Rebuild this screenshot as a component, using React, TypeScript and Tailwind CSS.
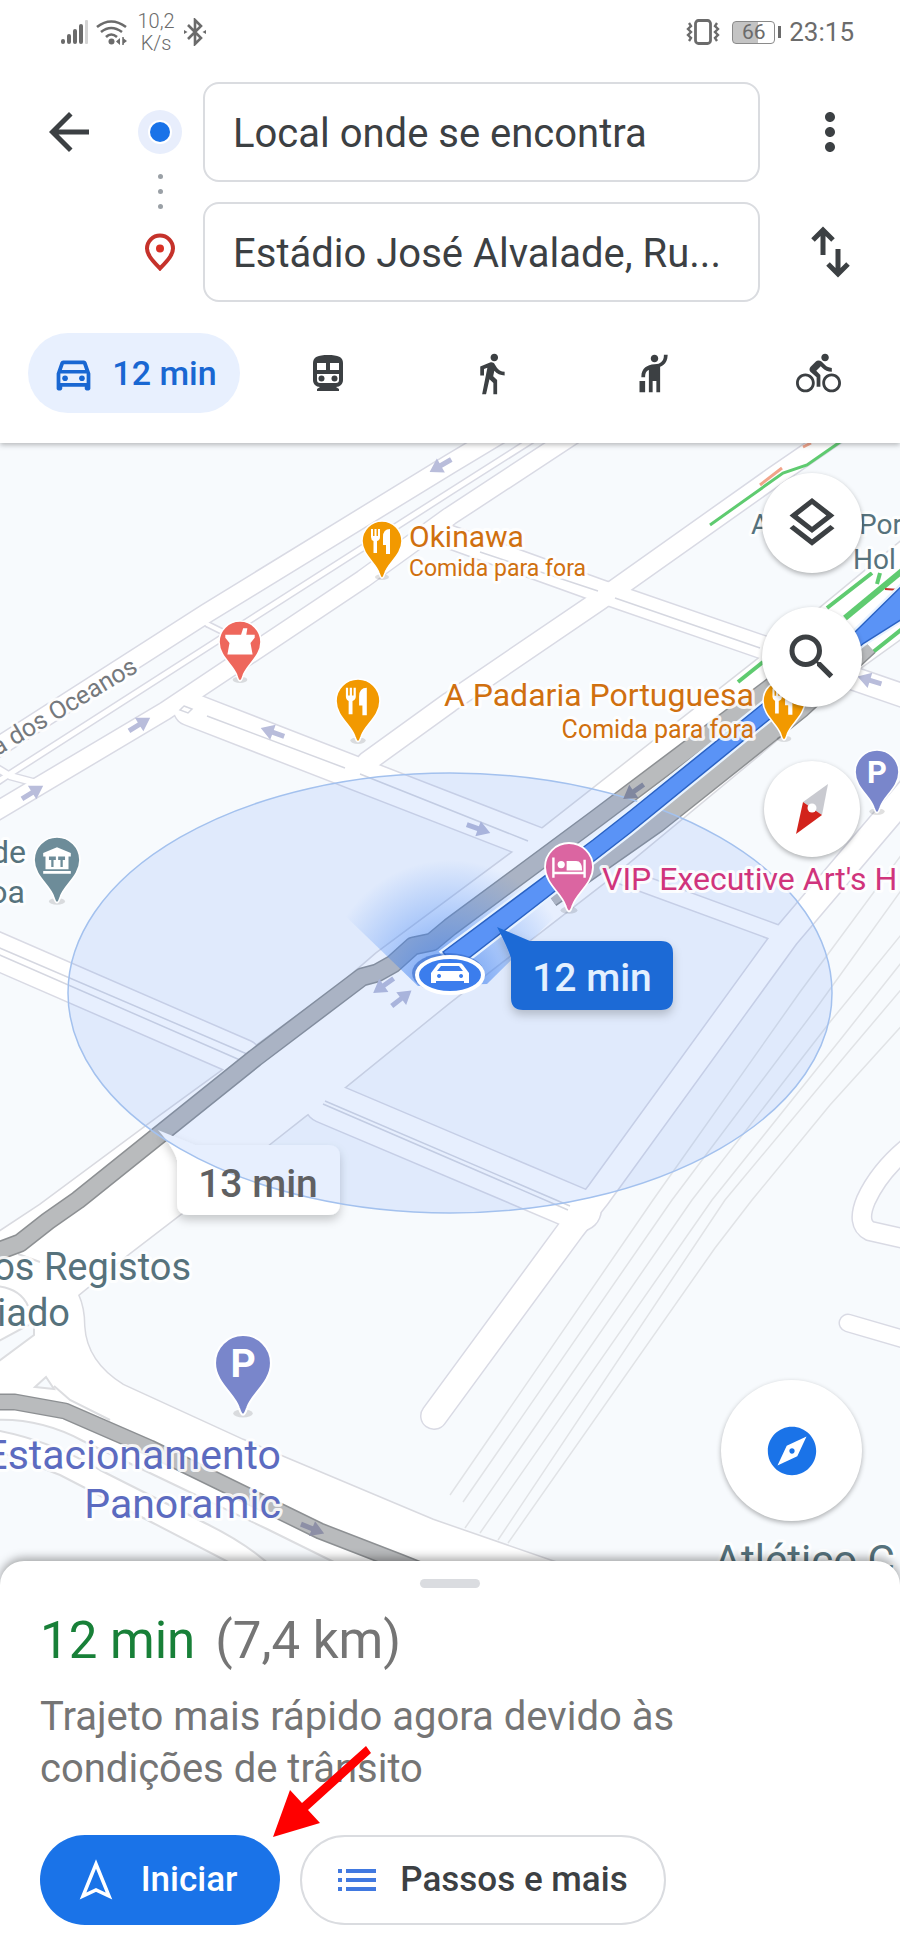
import type { ReactNode } from "react";
import {
  MdArrowBack,
  MdDirectionsBike,
  MdDirectionsWalk,
  MdExplore,
  MdHail,
  MdMoreVert,
  MdOutlineDirectionsCar,
  MdOutlineLayers,
  MdSearch,
} from "react-icons/md";

/* ---------- Status bar ---------- */

const StatusBar = () => (
  <div className="flex h-16 items-center justify-between pl-[60px] pr-[46px] text-[#6b6b6b]">
    <div className="flex items-center gap-2">
      <svg width="28" height="26" viewBox="0 0 28 26" fill="currentColor" aria-hidden="true">
        <rect x="1" y="20" width="4" height="5" rx="2" />
        <rect x="7" y="15" width="4" height="10" rx="2" />
        <rect x="13" y="10" width="4" height="15" rx="2" />
        <rect x="19" y="5" width="4" height="20" rx="2" />
        <rect x="25" y="1" width="3" height="24" rx="1" fill="#d4d4d4" />
      </svg>
      <svg width="32" height="26" viewBox="0 0 32 26" fill="none" stroke="currentColor" strokeWidth="2.6" aria-hidden="true">
        <path d="M1 8Q15 -3 30 8" />
        <path d="M5 13Q15 5 26 13" />
        <path d="M10 18Q15 13 21 18" />
        <circle cx="15.500" cy="22.500" r="3" fill="currentColor" stroke="none" />
        <path d="M24 19v7l-4-3.500zM26 19v7M27 19v6l4-3z" fill="currentColor" stroke="none" />
        <path d="M27 18v8" strokeWidth="1.500" />
      </svg>
      <p className="w-10 text-center text-[20px] font-light leading-[22px]">
        10,2
        <br />
        K/s
      </p>
      <svg width="22" height="28" viewBox="0 0 22 28" fill="none" stroke="currentColor" strokeWidth="2.600" aria-hidden="true">
        <path d="M4 7l13 13-6 6V2l6 6L4 21" />
        <path d="M0 12l3.500 2L0 16zM22 12l-3.500 2 3.500 2z" fill="currentColor" stroke="none" />
      </svg>
    </div>
    <div className="flex items-center gap-2">
      <svg width="34" height="26" viewBox="0 0 34 26" fill="none" stroke="currentColor" strokeWidth="2" aria-hidden="true">
        <rect x="9.500" y="1.500" width="15" height="23" rx="3" strokeWidth="2.800" />
        <path d="M3 4l2 3-3 3 3 3-3 3 3 3-2 3M31 4l-2 3 3 3-3 3 3 3-3 3 2 3" strokeWidth="2.400" />
      </svg>
      <div className="ml-1 flex items-center gap-[3px]">
        <div className="flex h-[23px] w-[43px] items-center justify-center rounded-[4px] border border-[#8a8a8a] bg-linear-to-r from-[#c4c4c4] from-60% to-white to-60% text-[21px] leading-none">
          66
        </div>
        <span className="h-3 w-[3px] bg-[#6b6b6b]" />
      </div>
      <span className="text-[26px] leading-none">23:15</span>
    </div>
  </div>
);

/* ---------- Header ---------- */

const SwapIcon = () => (
  <svg width="40" height="52" viewBox="0 0 40 52" fill="none" stroke="currentColor" strokeWidth="5" aria-hidden="true">
    <path d="M13 29V5M3 14L13 4l10 10" />
    <path d="M28 23v24M18 38l10 10 10-10" />
  </svg>
);

const TransitIcon = () => (
  <svg width="30" height="36" viewBox="0 0 30 36" fill="currentColor" aria-hidden="true">
    <path
      fillRule="evenodd"
      d="M15 0C5 0 0 2 0 8v17c0 4 3 7 7 7l-3 2v2h22v-2l-3-2c4 0 7-3 7-7V8c0-6-5-8-15-8zM4 8h9v7H4zM17 8h9v7h-9zM4 19h22v6c0 2-1 3-3 3H7c-2 0-3-1-3-3z"
    />
    <circle cx="8.500" cy="23.500" r="3" />
    <circle cx="21.500" cy="23.500" r="3" />
  </svg>
);

const modes = [
  { label: "Transportes públicos", icon: <TransitIcon /> },
  { label: "A pé", icon: <MdDirectionsWalk size={45} /> },
  { label: "Serviços de transporte", icon: <MdHail size={45} /> },
  { label: "Bicicleta", icon: <MdDirectionsBike size={45} /> },
];

const fieldClass =
  "h-[100px] w-full min-w-0 rounded-2xl border-2 border-[#dadce0] bg-white px-7 pt-[2px] text-[40px] text-[#3c4043] outline-none";

const Header = () => (
  <header className="relative z-10 bg-white pb-[30px] text-[#3c4043] shadow-[0_2px_5px_rgba(60,64,67,0.35)]">
    <StatusBar />
    <div className="mt-[18px] flex">
      <div className="flex h-[100px] w-[138px] items-center justify-center">
        <button type="button" aria-label="Voltar">
          <MdArrowBack size={60} />
        </button>
      </div>
      <div className="mr-[21px] flex w-11 flex-col items-center pt-7">
        <span className="flex size-11 items-center justify-center rounded-full bg-[#e8eefc]">
          <span className="size-5 rounded-full bg-[#1a73e8] ring-2 ring-white" />
        </span>
        <span className="mt-5 flex flex-col gap-[10px]">
          <span className="size-[5px] rounded-full bg-[#9aa0a6]" />
          <span className="size-[5px] rounded-full bg-[#9aa0a6]" />
          <span className="size-[5px] rounded-full bg-[#9aa0a6]" />
        </span>
        <svg className="mt-6" width="32" height="38" viewBox="0 0 32 38" aria-hidden="true">
          <path
            d="M16 35.500C9 28 3 22 3 15.500a13 13 0 0 1 26 0C29 22 23 28 16 35.500z"
            fill="none"
            stroke="#c5322b"
            strokeWidth="4"
          />
          <circle cx="16" cy="15.500" r="4" fill="#d93025" />
        </svg>
      </div>
      <div className="flex min-w-0 flex-1 flex-col gap-5">
        <input className={fieldClass} aria-label="Ponto de partida" defaultValue="Local onde se encontra" />
        <input className={fieldClass} aria-label="Destino" defaultValue="Estádio José Alvalade, Ru..." />
      </div>
      <div className="flex w-[140px] flex-col items-center gap-5">
        <button type="button" aria-label="Mais opções" className="flex h-[100px] items-center">
          <MdMoreVert size={60} />
        </button>
        <button type="button" aria-label="Trocar partida e destino" className="flex h-[100px] items-center">
          <SwapIcon />
        </button>
      </div>
    </div>
    <nav className="mt-[31px] flex gap-[6px] pl-7">
      <button
        type="button"
        className="flex h-20 w-[212px] items-center justify-center gap-4 rounded-full bg-[#e8f0fe] text-[34px] font-medium text-[#1967d2]"
      >
        <MdOutlineDirectionsCar size={45} />
        12 min
      </button>
      <div className="grid flex-1 grid-cols-4">
        {modes.map((mode) => (
          <button key={mode.label} type="button" aria-label={mode.label} className="flex items-center justify-center">
            {mode.icon}
          </button>
        ))}
      </div>
    </nav>
  </header>
);

/* ---------- Map ---------- */

const streets = [
  { d: "M-10 752L207 613L450 464L500 434", w: 18 },
  { d: "M-10 787L5 777L217 641L450 492L535 438", w: 5 },
  { d: "M-10 764L10 776L40 784", w: 6 },
  { d: "M-20 821L165 711L363 579L450 516L572 436", w: 17 },
  { d: "M207 624L225 633", w: 4 },
  { d: "M190 709L540 845", w: 32 },
  { d: "M367 762L450 702L600 600L775 476L845 428", w: 19 },
  { d: "M450 537L600 591L765 648L910 698", w: 22 },
  { d: "M-10 948L243 1058", w: 36 },
  { d: "M600 868L785 936", w: 15 },
  { d: "M325 1102L580 1210", w: 41 },
  { d: "M434 1416L572 1228L598 1195L786 936L910 790", w: 25 },
  { d: "M910 1146Q880 1170 866 1200Q856 1224 870 1231L910 1240", w: 18 },
  { d: "M848 1323L910 1341", w: 16 },
];

const avenue =
  "M910 534L757 660L543 828L513 852L377 953L340 985L160 1116L40 1205L-10 1238V1600H620L560 1564L433 1520L243 1440L123 1385Q86 1362 84 1326Q84 1308 78 1295L127 1255L183 1212L305 1116L345 1087L450 1002L610 878L760 754L860 668L910 632Z";

const rails = [
  "M450 1495L653 1200L800 992L905 850",
  "M463 1502L672 1200L815 1010L905 885",
  "M465 1528L692 1200L830 1022L905 930",
  "M480 1533L712 1200L840 1040L905 958",
  "M498 1540L725 1200L850 1050L905 985",
  "M508 1543L715 1248L752 1200L830 1105L905 1022",
];

const medians = [
  "M207 716L345 768M360 774L528 841",
  "M480 552L598 591M615 598L760 648",
  "M-5 946L247 1054M-5 953L240 1060",
  "M325 1101L570 1206M323 1104L568 1210",
  "M184 706l8 3-4 4-8-3z",
];

const mainRoute = "M443 952L593 840L630 811L760 706L856 631L910 578V614L864 643L760 727L630 833L456 968Z";

const Arrow = ({ x, y, angle, color = "#b9bddb" }: { x: number; y: number; angle: number; color?: string }) => (
  <path d="M-13 -2.500H-1V-8L12 0L-1 8V2.500H-13Z" fill={color} transform={`translate(${x} ${y}) rotate(${angle})`} />
);

const Pin = ({ x, y, r, color, children }: { x: number; y: number; r: number; color: string; children: ReactNode }) => (
  <g transform={`translate(${x} ${y}) scale(${r / 20})`}>
    <ellipse cx="0" cy="36" rx="7" ry="3" fill="#000" opacity="0.12" />
    <path
      d="M0 37C-1.500 37 -2 35 -3 32C-6 22 -20 14 -20 0A20 20 0 1 1 20 0C20 14 6 22 3 32C2 35 1.500 37 0 37Z"
      fill={color}
      stroke="#fff"
      strokeWidth="1.500"
    />
    {children}
  </g>
);

const Food = () => (
  <g fill="#fff">
    <path d="M-11 -12h2v7h1.500v-7h2v7H-4v-7h2v8q0 3-3 4v12h-3.500V0Q-11-1-11-4z" />
    <path d="M8 -12v25H4V4H1V-4Q1-12 8-12z" />
  </g>
);

const Parking = () => (
  <text y="10" textAnchor="middle" fontSize="28" fontWeight="700" fill="#fff">
    P
  </text>
);

const CityMap = () => (
  <svg className="block h-full w-full" viewBox="0 443 900 1142" role="img" aria-label="Mapa do trajeto" fontFamily="Roboto, sans-serif">
    <defs>
      <radialGradient id="beam" gradientUnits="userSpaceOnUse" cx="450" cy="985" r="125">
        <stop offset="0.2" stopColor="#3b7ded" stopOpacity="0.6" />
        <stop offset="0.6" stopColor="#4285f4" stopOpacity="0.3" />
        <stop offset="1" stopColor="#4285f4" stopOpacity="0" />
      </radialGradient>
      <filter id="soft" x="-20%" y="-20%" width="140%" height="160%">
        <feDropShadow dx="0" dy="5" stdDeviation="5" floodOpacity="0.2" />
      </filter>
    </defs>
    <rect y="443" width="900" height="1142" fill="#f7fafd" />

    {/* railway */}
    <g fill="none" stroke="#e1e3e6" strokeWidth="1.500">
      {rails.map((d) => (
        <path key={d} d={d} />
      ))}
    </g>

    {/* streets: casings first so that the junctions merge */}
    <g fill="none" strokeLinecap="round" strokeLinejoin="round">
      {streets.map((s) => (
        <path key={s.d} d={s.d} stroke="#d9dae4" strokeWidth={s.w + 3} />
      ))}
      <path d={avenue} stroke="#d9dae0" strokeWidth="3" />
      {streets.map((s) => (
        <path key={s.d} d={s.d} stroke="#fff" strokeWidth={s.w} />
      ))}
    </g>
    <path d={avenue} fill="#fff" />
    <g fill="none" stroke="#d5d7e0" strokeWidth="1.500">
      {medians.map((d) => (
        <path key={d} d={d} />
      ))}
    </g>

    {/* roundabout and blocks in the south west */}
    <g fill="#f7fafd" stroke="#dcdde0" strokeWidth="2">
      <path d="M-5 1420Q40 1418 83 1441L177 1486L267 1529L350 1570H275Q250 1545 205 1523L100 1470Q50 1440 -5 1430Z" />
      <path d="M-5 1450L60 1475L153 1523L240 1568L230 1600H-5Z" />
      <path d="M-5 1343L34 1322V1335L-5 1364Z" />
      <path d="M-5 1286Q20 1288 28 1306" fill="none" />
      <path d="M35 1387L46 1377L54 1389Z" />
      <path d="M54 1386L70 1400L110 1420" fill="none" />
      <path d="M18 1254L40 1262" fill="none" />
    </g>

    {/* live traffic */}
    <g fill="none" stroke="#5fcb70" strokeWidth="4">
      <path d="M710 525L783 473L807 465L840 442" strokeWidth="3" />
      <path d="M738 682L763 662M827 608L872 573M863 660L902 629" />
      <path d="M845 618L902 571" strokeWidth="6" />
      <path d="M877 584L880 573" />
      <path d="M760 485L782 468M803 447l8-4" stroke="#f2a48a" strokeWidth="3" />
      <path d="M885 589L902 590" stroke="#c5322b" strokeWidth="2" />
    </g>

    {/* alternative routes */}
    <g fill="none" strokeLinejoin="round">
      <g stroke="#8d9093" strokeWidth="19">
        <path d="M775 684L597 818L450 927L432 942L413 946L393 964L377 973L362 977L255 1058L78 1200L48 1221L20 1243L-20 1258" />
        <path d="M868 645L800 708L657 822L550 897" strokeWidth="22" />
        <path d="M-20 1402H15L65 1411L150 1448L320 1531L400 1562L440 1578" strokeWidth="17" />
      </g>
      <g stroke="#b9bbbd" strokeWidth="16">
        <path d="M775 684L597 818L450 927L432 942L413 946L393 964L377 973L362 977L255 1058L78 1200L48 1221L20 1243L-20 1258" />
        <path d="M868 645L800 708L657 822L550 897" strokeWidth="19" />
        <path d="M-20 1402H15L65 1411L150 1448L320 1531L400 1562L440 1578" strokeWidth="14" />
      </g>
    </g>

    {/* 13 min callout, below the accuracy circle */}
    <path
      d="M158 1130L195 1145H328Q340 1145 340 1157V1203Q340 1215 328 1215H189Q177 1215 177 1203V1160Q174 1148 158 1130Z"
      fill="#fff"
      filter="url(#soft)"
    />
    <ellipse cx="450" cy="993" rx="382" ry="220" fill="#4285f4" fillOpacity="0.13" stroke="#a3c1ee" strokeWidth="1.500" />

    <Arrow x={440} y={466} angle={150} />
    <Arrow x={140} y={724} angle={-32} />
    <Arrow x={33} y={792} angle={-32} />
    <Arrow x={272} y={732} angle={200} />
    <Arrow x={479} y={829} angle={20} color="#a9b4dc" />
    <Arrow x={383} y={986} angle={145} color="#a9b4dc" />
    <Arrow x={402} y={998} angle={-38} color="#a9b4dc" />
    <Arrow x={633} y={792} angle={145} color="#80879f" />
    <Arrow x={313} y={1529} angle={22} color="#8d8fa6" />
    <Arrow x={869} y={680} angle={197} />

    {/* heading beam and main route */}
    <path d="M418 986L335 906L370 850H560L570 902L487 984Z" fill="url(#beam)" />
    <path d={mainRoute} fill="none" stroke="#e8f3ff" strokeWidth="6" />
    <path d={mainRoute} fill="#5a93f6" stroke="#2a62c4" strokeWidth="1.500" />
    <ellipse cx="448" cy="973" rx="36" ry="20" fill="#3367c7" opacity="0.6" />
    <ellipse cx="450" cy="975" rx="33" ry="18" fill="#3b7ded" stroke="#fff" strokeWidth="4" />
    <path
      fillRule="evenodd"
      fill="#fff"
      d="M431 983V973L437 965Q438 963 441 963H459Q462 963 463 965L469 973V983H464V981H436V983ZM437 971H463L459 966H441ZM439 974a2 2 0 1 0 .1 0zM461 974a2 2 0 1 0 .1 0z"
    />

    {/* places */}
    <Pin x={382} y={541} r={20} color="#f29900">
      <Food />
    </Pin>
    <Pin x={358} y={701} r={22} color="#f29900">
      <Food />
    </Pin>
    <Pin x={784} y={701} r={21} color="#f29900">
      <Food />
    </Pin>
    <Pin x={240} y={642} r={21} color="#ee675c">
      <path d="M-14 -7H1L3 -13H7L6 -7H14V-4L10 1L12 12H-12L-10 1L-14 -4Z" fill="#fff" />
    </Pin>
    <Pin x={57} y={860} r={23} color="#6d8c99">
      <path
        d="M0 -11L12 -6V-3H10V8H-10V-3H-12V-6ZM-7 -3V0H-5V6H-3V0H-1V-3ZM1 -3V0H3V6H5V0H7V-3ZM-12 9.500H12V12H-12Z"
        fill="#fff"
        fillRule="evenodd"
      />
    </Pin>
    <Pin x={569} y={867} r={24} color="#db65a1">
      <g fill="#fff">
        <path d="M-14 -8H-12V4H12V-6H14V9H12V6H-12V9H-14Z" />
        <circle cx="-6.500" cy="-2" r="3" />
        <path d="M-2 -5H6Q11 -5 11 3H-2Z" />
      </g>
    </Pin>
    <Pin x={877} y={772} r={22} color="#7986cb">
      <Parking />
    </Pin>
    <Pin x={243} y={1363} r={28} color="#7986cb">
      <Parking />
    </Pin>

    {/* labels with a light halo */}
    <g stroke="#fff" strokeOpacity="0.85" strokeWidth="6" strokeLinejoin="round" paintOrder="stroke">
      <g fill="#d0700f">
        <text x="409" y="547" fontSize="30">Okinawa</text>
        <text x="409" y="576" fontSize="23">Comida para fora</text>
        <text x="754" y="706" fontSize="32" textAnchor="end">A Padaria Portuguesa</text>
        <text x="754" y="738" fontSize="25" textAnchor="end">Comida para fora</text>
      </g>
      <text x="602" y="890" fontSize="32" fill="#d0347c">VIP Executive Art's H</text>
      <g fill="#56727c">
        <text x="751" y="534" fontSize="28">A</text>
        <text x="859" y="534" fontSize="28">Por</text>
        <text x="853" y="569" fontSize="28">Hol</text>
        <text x="26" y="863" fontSize="32" textAnchor="end">de</text>
        <text x="25" y="903" fontSize="32" textAnchor="end">oa</text>
        <text x="191" y="1280" fontSize="38" textAnchor="end">os Registos</text>
        <text x="70" y="1326" fontSize="38" textAnchor="end">iado</text>
        <text x="714" y="1575" fontSize="42">Atlético C</text>
      </g>
      <g fill="#5c6bc0" fontSize="41" textAnchor="end">
        <text x="281" y="1469">Estacionamento</text>
        <text x="281" y="1518">Panoramic</text>
      </g>
      <text fontSize="25" textAnchor="end" fill="#75797d" transform="translate(139 671) rotate(-31)">
        a dos Oceanos
      </text>
    </g>

    {/* travel time callouts */}
    <path
      d="M497 927L530 941H661Q673 941 673 953V998Q673 1010 661 1010H523Q511 1010 511 998V958Q508 948 497 927Z"
      fill="#1f6bd6"
      filter="url(#soft)"
    />
    <g fontSize="39" fontWeight="500" textAnchor="middle">
      <text x="592" y="991" fill="#e3f0ff">12 min</text>
      <text x="258" y="1197" fill="#5f6062">13 min</text>
    </g>
  </svg>
);

const roundButton =
  "pointer-events-auto flex items-center justify-center rounded-full bg-white text-[#3c4043] shadow-[0_2px_5px_rgba(0,0,0,0.3)]";

const MapPanel = () => (
  <section className="relative aspect-[900/1142] w-full overflow-hidden">
    <CityMap />
    <div className="pointer-events-none absolute inset-0 flex flex-col items-end justify-between pb-16 pr-[38px] pt-[30px]">
      <div className="flex flex-col items-center">
        <button type="button" aria-label="Camadas" className={`${roundButton} size-[100px]`}>
          <MdOutlineLayers size={60} />
        </button>
        <button type="button" aria-label="Pesquisar" className={`${roundButton} mt-[34px] size-[100px]`}>
          <MdSearch size={60} />
        </button>
        <button type="button" aria-label="Bússola" className={`${roundButton} mt-[54px] size-24`}>
          <svg width="34" height="52" viewBox="0 0 34 52" aria-hidden="true">
            <path d="M33 1L8 19L27 32Z" fill="#c9cad0" />
            <path d="M8 19L27 32L1 51Z" fill="#d2231c" />
            <circle cx="17" cy="25" r="4.500" fill="#fff" />
          </svg>
        </button>
      </div>
      <button type="button" aria-label="Explorar" className={`${roundButton} size-[141px]`}>
        <MdExplore size={58} className="text-[#1a73e8]" />
      </button>
    </div>
  </section>
);

/* ---------- Bottom sheet ---------- */

const TripSheet = () => (
  <section className="relative z-10 -mt-6 flex flex-col rounded-t-3xl bg-white px-10 pb-[25px] pt-[18px] shadow-[0_-3px_10px_rgba(0,0,0,0.35)]">
    <span className="h-[9px] w-[60px] self-center rounded-full bg-[#dadce0]" />
    <h1 className="mt-[23px] flex gap-5 text-[51px] leading-[60px] text-[#757575]">
      <span className="text-[#188038]">12 min</span>
      <span>(7,4 km)</span>
    </h1>
    <p className="mt-5 max-w-[680px] text-[40px] leading-[52px] text-[#757575]">
      Trajeto mais rápido agora devido às condições de trânsito
    </p>
    <div className="mt-10 flex gap-5 text-[35px] font-medium">
      <button
        type="button"
        className="flex h-[90px] w-[240px] items-center justify-center gap-7 rounded-full bg-[#1a73e8] pr-1 text-white"
      >
        <svg width="34" height="42" viewBox="0 0 34 42" fill="none" stroke="currentColor" strokeWidth="3.500" aria-hidden="true">
          <path d="M17 5L30 37L17 31L4 37Z" />
        </svg>
        Iniciar
      </button>
      <button
        type="button"
        className="flex h-[90px] w-[366px] items-center justify-center gap-6 rounded-full border-2 border-[#dadce0] bg-white text-[#3c4043]"
      >
        <svg width="38" height="22" viewBox="0 0 38 22" fill="#4179e0" aria-hidden="true">
          <path d="M0 0h4v4H0zM8 0h30v4H8zM0 9h4v4H0zM8 9h30v4H8zM0 18h4v4H0zM8 18h30v4H8z" />
        </svg>
        Passos e mais
      </button>
    </div>
    {/* pointer to the start button */}
    <svg className="pointer-events-none absolute left-[273px] top-[185px]" width="99" height="92" viewBox="0 0 99 92" aria-hidden="true">
      <path d="M0 91L17 44L29 57L93 0L98 7L35 64L47 77Z" fill="#ff0000" />
    </svg>
  </section>
);

const App = () => {
  return (
    <main className="min-h-screen overflow-x-hidden bg-white font-[Roboto,'Liberation_Sans',sans-serif]">
      <Header />
      <MapPanel />
      <TripSheet />
    </main>
  );
};

export default App;
